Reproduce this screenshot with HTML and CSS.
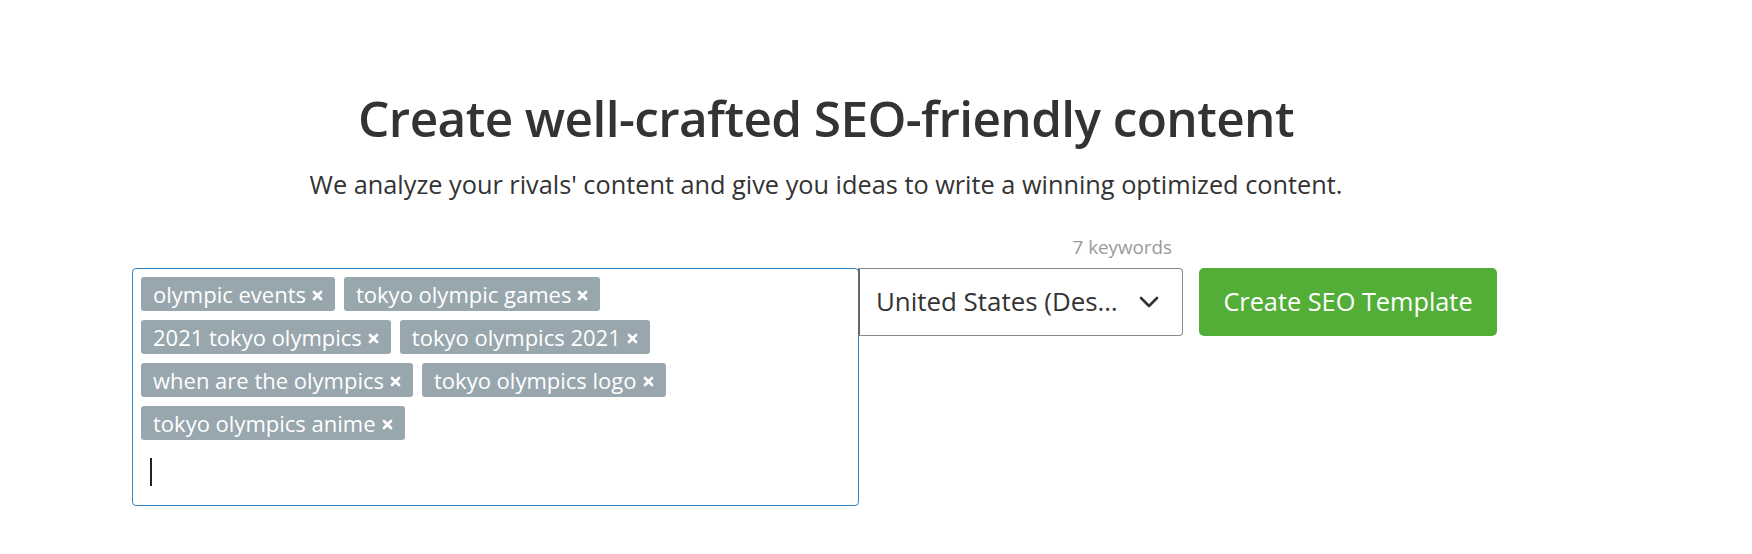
FILE: index.html
```html
<!DOCTYPE html>
<html lang="en">
<head>
<meta charset="utf-8">
<title>SEO Content Template</title>
<link rel="stylesheet" href="styles.css">
</head>
<body>
<main class="page">
  <h1 class="title">Create well-crafted SEO-friendly content</h1>
  <p class="subtitle">We analyze your rivals' content and give you ideas to write a winning optimized content.</p>
  <div class="meta"><span class="count">7 keywords</span></div>
  <div class="form">
    <div class="keywords">
      <div class="tags">
        <span class="tag">olympic events<svg class="x" width="11" height="11" viewBox="0 0 11 11"><path d="M2 2 L9 9 M9 2 L2 9" stroke="#fff" stroke-width="2.8" stroke-linecap="round"/></svg></span>
        <span class="tag">tokyo olympic games<svg class="x" width="11" height="11" viewBox="0 0 11 11"><path d="M2 2 L9 9 M9 2 L2 9" stroke="#fff" stroke-width="2.8" stroke-linecap="round"/></svg></span>
        <span class="tag">2021 tokyo olympics<svg class="x" width="11" height="11" viewBox="0 0 11 11"><path d="M2 2 L9 9 M9 2 L2 9" stroke="#fff" stroke-width="2.8" stroke-linecap="round"/></svg></span>
        <span class="tag">tokyo olympics 2021<svg class="x" width="11" height="11" viewBox="0 0 11 11"><path d="M2 2 L9 9 M9 2 L2 9" stroke="#fff" stroke-width="2.8" stroke-linecap="round"/></svg></span>
        <span class="tag">when are the olympics<svg class="x" width="11" height="11" viewBox="0 0 11 11"><path d="M2 2 L9 9 M9 2 L2 9" stroke="#fff" stroke-width="2.8" stroke-linecap="round"/></svg></span>
        <span class="tag">tokyo olympics logo<svg class="x" width="11" height="11" viewBox="0 0 11 11"><path d="M2 2 L9 9 M9 2 L2 9" stroke="#fff" stroke-width="2.8" stroke-linecap="round"/></svg></span>
        <span class="tag">tokyo olympics anime<svg class="x" width="11" height="11" viewBox="0 0 11 11"><path d="M2 2 L9 9 M9 2 L2 9" stroke="#fff" stroke-width="2.8" stroke-linecap="round"/></svg></span>
      </div>
      <div class="input-line"><span class="caret"></span></div>
    </div>
    <div class="select">
      <span class="select-text">United States (Des…</span>
      <svg class="chevron" width="20" height="12" viewBox="0 0 20 12"><path d="M2 2 L10 10 L18 2" fill="none" stroke="#333" stroke-width="2.6" stroke-linecap="round" stroke-linejoin="round"/></svg>
    </div>
    <button class="btn">Create SEO Template</button>
  </div>
</main>
</body>
</html>
```

FILE: styles.css
```css
html, body {
  margin: 0;
  padding: 0;
  background: #ffffff;
}
body {
  font-family: "Open Sans", Roboto, sans-serif;
  color: #333333;
}
.page {
  margin-left: 132px;
  width: 1388px;
  padding-top: 88px;
}
.title {
  margin: 0;
  text-align: center;
  font-size: 49.5px;
  line-height: 60px;
  font-weight: 600;
  letter-spacing: -0.6px;
  color: #333333;
}
.subtitle {
  margin: 22px 0 0;
  text-align: center;
  font-size: 25.3px;
  line-height: 28px;
  color: #333333;
}
.meta {
  width: 1050px;
  margin-top: 38px;
  display: flex;
  justify-content: flex-end;
}
.count {
  font-size: 18.8px;
  line-height: 22px;
  color: #9a9a9a;
  padding-right: 10px;
}
.form {
  margin-top: 10px;
  display: flex;
  align-items: flex-start;
}
.keywords {
  box-sizing: border-box;
  width: 727px;
  height: 238px;
  border: 1px solid #3287c9;
  border-radius: 4px;
  padding: 8px 8px;
}
.tags {
  display: flex;
  flex-wrap: wrap;
  gap: 9px 9px;
}
.tag {
  display: inline-flex;
  align-items: center;
  height: 34px;
  padding: 0 12px;
  background: #98a6ae;
  color: #ffffff;
  border-radius: 3px;
  font-size: 22px;
  white-space: pre;
}
.x {
  display: block;
  margin-left: 6px;
  margin-top: 2px;
}
.input-line {
  height: 48px;
  padding: 18px 0 0 9px;
  box-sizing: border-box;
}
.caret {
  display: block;
  width: 2px;
  height: 28px;
  background: #222222;
}
.select {
  box-sizing: border-box;
  width: 325px;
  height: 68px;
  margin-left: -1px;
  border: 1px solid #8a8a8a;
  border-left: 2px solid #5f6a72;
  border-radius: 0 4px 4px 0;
  background: #ffffff;
  display: flex;
  align-items: center;
  justify-content: space-between;
  padding: 0 23px 3px 16px;
}
.select-text {
  font-size: 25.9px;
  color: #333333;
}
.chevron {
  display: block;
  margin-top: 3px;
}
.btn {
  box-sizing: border-box;
  margin-left: 16px;
  width: 298px;
  height: 68px;
  border: none;
  border-radius: 5px;
  background: #52ae37;
  color: #ffffff;
  font-family: "Open Sans", Roboto, sans-serif;
  font-size: 25.3px;
  padding: 0 0 3px;
}
```
